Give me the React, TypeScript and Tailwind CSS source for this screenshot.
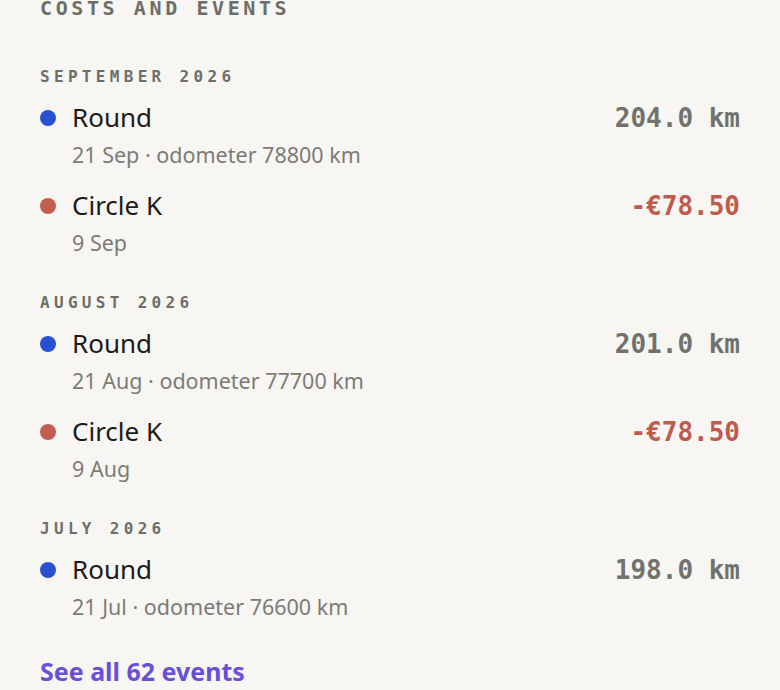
import React from "react";

type Ev = { title: string; sub: string; value: string; kind: "trip" | "cost" };
type Group = { month: string; events: Ev[] };

const groups: Group[] = [
  {
    month: "SEPTEMBER 2026",
    events: [
      { title: "Round", sub: "21 Sep · odometer 78800 km", value: "204.0 km", kind: "trip" },
      { title: "Circle K", sub: "9 Sep", value: "-€78.50", kind: "cost" },
    ],
  },
  {
    month: "AUGUST 2026",
    events: [
      { title: "Round", sub: "21 Aug · odometer 77700 km", value: "201.0 km", kind: "trip" },
      { title: "Circle K", sub: "9 Aug", value: "-€78.50", kind: "cost" },
    ],
  },
  {
    month: "JULY 2026",
    events: [
      { title: "Round", sub: "21 Jul · odometer 76600 km", value: "198.0 km", kind: "trip" },
    ],
  },
];

const mono = "font-['DejaVu_Sans_Mono','Liberation_Mono',monospace]";
const sans = "font-['Noto_Sans','Open_Sans',sans-serif]";

function Row({ ev }: { ev: Ev }) {
  const isCost = ev.kind === "cost";
  return (
    <div className="flex flex-col">
      <div className="flex h-[34px] items-center justify-between">
        <div className="flex items-center">
          <span
            className={`h-[16px] w-[16px] rounded-full ${isCost ? "bg-[#c25d4f]" : "bg-[#2a50d2]"}`}
          />
          <span className={`${sans} ml-[16px] mt-[-3px] text-[26px] leading-[34px] text-[#1b1b19]`}>
            {ev.title}
          </span>
        </div>
        <span
          className={`${mono} text-[26px] font-bold leading-[34px] ${isCost ? "text-[#c05a4c]" : "text-[#72726d]"}`}
        >
          {ev.value}
        </span>
      </div>
      <div className={`${sans} mt-[6px] h-[28px] pl-[32px] text-[21.5px] leading-[28px] text-[#7d7b76]`}>
        {ev.sub}
      </div>
    </div>
  );
}

export default function App() {
  return (
    <div className="min-h-[690px] w-[780px] overflow-hidden bg-[#f7f6f3] px-[40px]">
      <h2
        className={`${mono} mt-[-4px] text-[20px] font-bold leading-[24px] tracking-[0.18em] text-[#6e6e69]`}
      >
        COSTS AND EVENTS
      </h2>
      <div className="mt-[47px] flex flex-col gap-[36px]">
        {groups.map((g) => (
          <div key={g.month} className="flex flex-col">
            <div
              className={`${mono} h-[20px] text-[16px] font-bold leading-[20px] tracking-[0.27em] text-[#6e6e69]`}
            >
              {g.month}
            </div>
            <div className="mt-[14px] flex flex-col gap-[20px]">
              {g.events.map((ev, i) => (
                <Row key={i} ev={ev} />
              ))}
            </div>
          </div>
        ))}
      </div>
      <div className={`${sans} mt-[35px] text-[25px] font-bold leading-[30px] text-[#6a4fd8]`}>
        See all 62 events
      </div>
    </div>
  );
}
